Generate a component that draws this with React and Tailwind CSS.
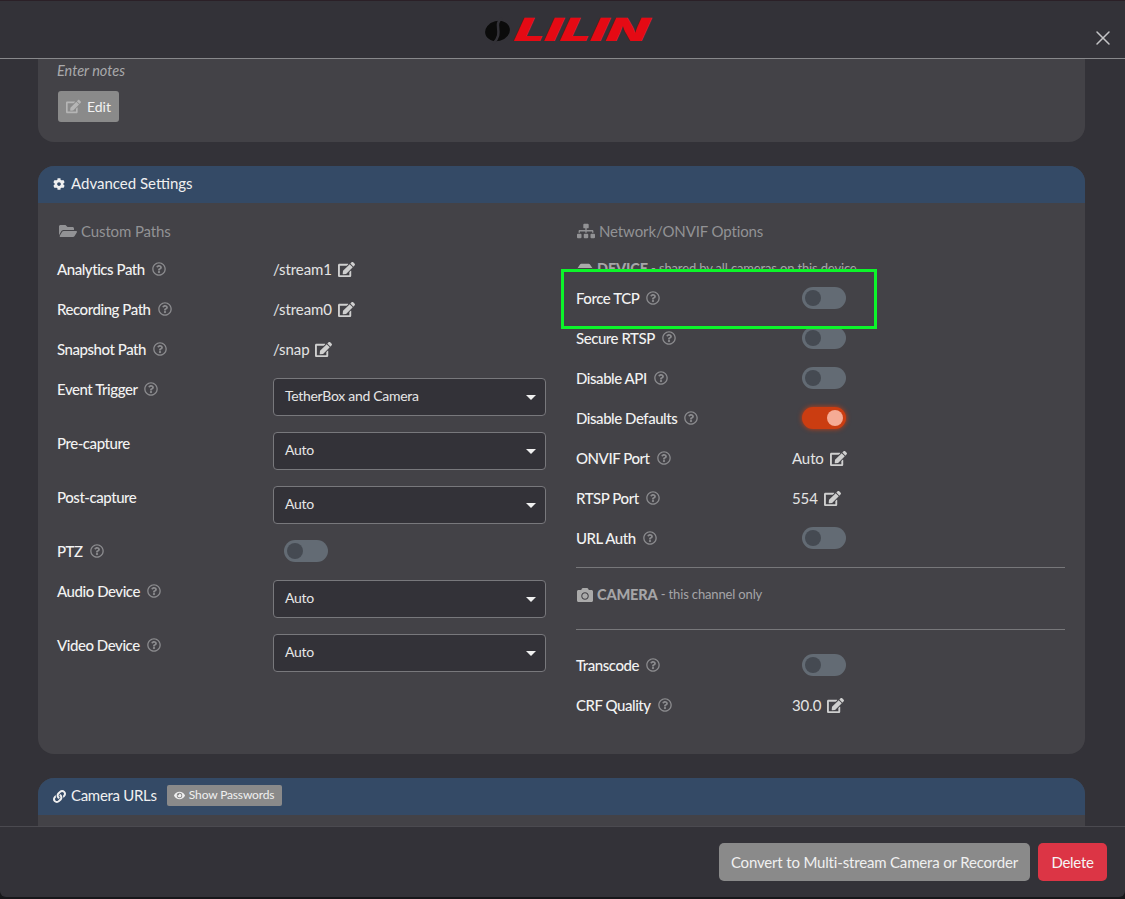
import { FaCamera, FaCog, FaEdit, FaEye, FaFolderOpen, FaHdd, FaLink, FaRegQuestionCircle, FaSitemap } from "react-icons/fa";
import { X } from "lucide-react";

function Help({ className = "" }) {
  return <FaRegQuestionCircle className={`ml-[7px] inline-block text-[14px] text-[#8b8b8e] ${className}`} />;
}

function Toggle({ on = false, className = "" }) {
  return (
    <span
      className={`flex h-[22px] w-[44px] items-center rounded-full px-[3px] ${
        on ? "justify-end bg-[#cb3d11] shadow-[0_0_5px_#cb3d11]" : "justify-start bg-[#636b74]"
      } ${className}`}
    >
      <span className={`h-4 w-4 rounded-full ${on ? "bg-[#f5ab95]" : "bg-[#454a52]"}`} />
    </span>
  );
}

function Label({ children, help = true }) {
  return (
    <span className="flex h-[22px] w-[216px] shrink-0 items-center text-[15px] font-medium tracking-[-0.45px] text-[#f2f2f2]">
      {children}
      {help && <Help />}
    </span>
  );
}

function Row({ label, children }) {
  return (
    <div className="flex h-10 items-center">
      <Label>{label}</Label>
      {children}
    </div>
  );
}

function EditValue({ value }) {
  return (
    <span className="flex items-center text-[15px] tracking-[-0.1px] text-[#e4e4e4]">
      {value}
      <FaEdit className="ml-[6px] text-[17px] text-[#cfcfcf]" />
    </span>
  );
}

function SelectRow({ label, value, help = true }) {
  return (
    <div className="flex h-[54px] items-start">
      <Label help={help}>{label}</Label>
      <div className="flex h-[38px] w-[273px] items-center justify-between rounded-[4px] border border-[#78787c] bg-[#333238] pl-[11px] pr-[9px] text-[14px] tracking-[-0.3px] text-[#e6e6e6]">
        <span className="pb-[3px]">{value}</span>
        <span className="h-0 w-0 border-x-[5px] border-t-[5px] border-x-transparent border-t-[#f0f0f0]" />
      </div>
    </div>
  );
}

function Heading({ icon, children }) {
  return (
    <h3 className="flex h-[22px] items-center gap-[4px] pb-[2px] text-[15px] tracking-[-0.12px] text-[#929295]">
      {icon}
      {children}
    </h3>
  );
}

function Logo() {
  return (
    <svg width="176" height="40" viewBox="0 0 176 40" className="block">
      <ellipse cx="12.5" cy="21" rx="12.5" ry="10" transform="rotate(-14 12.5 21)" fill="#0b0b0b" />
      <path d="M17 8C7 15 20 22 8 34" fill="none" stroke="#333238" strokeWidth="2.5" />
      <text
        x="29"
        y="31"
        textLength="133"
        lengthAdjust="spacingAndGlyphs"
        fill="#e50a14"
        fontFamily="Inter, sans-serif"
        fontSize="32"
        fontWeight="900"
        fontStyle="italic"
        transform="skewX(-10) translate(5 0)"
      >
        LILIN
      </text>
    </svg>
  );
}

export default function App() {
  return (
    <div className="h-[899px] w-[1125px] overflow-hidden bg-[#17171a] font-['Lato',sans-serif]">
      <div className="flex h-[897px] flex-col overflow-hidden rounded-b-md border-t border-[#2b2027] bg-[#333238]">
        {/* Header */}
        <header className="relative flex h-[58px] shrink-0 items-center justify-center border-b border-[#88888b] pl-[21px]">
          <Logo />
          <X className="absolute right-[10px] top-[25px] h-6 w-6 text-[#c4c4c6]" strokeWidth={1.5} />
        </header>

        {/* Scrolling body */}
        <main className="flex-1 overflow-hidden pl-[38px] pr-[40px]">
          <section className="h-[83px] rounded-b-2xl bg-[#434247] pl-[20px] pt-[2px]">
            <p className="-ml-[1px] text-[14.5px] italic leading-[20px] text-[#a9a9ab]">Enter notes</p>
            <button className="mt-[10px] flex h-[31px] w-[61px] items-center justify-center gap-[6px] rounded-[3px] bg-[#8a8a8a] pb-[1px] text-[14px] text-[#f2f2f2]">
              <FaEdit className="text-[15px] text-[#b5b5b5]" />
              Edit
            </button>
          </section>

          <section className="mt-[24px] h-[588px] rounded-2xl bg-[#434247]">
            <div className="flex h-[37px] items-center gap-[6px] rounded-t-2xl bg-[#344a66] pb-[2px] pl-[15px] text-[15px] text-[#f0f0f0]">
              <FaCog className="text-[12px]" />
              Advanced Settings
            </div>

            <div className="grid grid-cols-[489px_489px] gap-x-[30px] pl-[19px] pt-[18px]">
              {/* Left column */}
              <div>
                <Heading icon={<FaFolderOpen className="ml-[2px] text-[18px]" />}>Custom Paths</Heading>
                <div className="mt-[6px]">
                  <Row label="Analytics Path"><EditValue value="/stream1" /></Row>
                  <Row label="Recording Path"><EditValue value="/stream0" /></Row>
                  <Row label="Snapshot Path"><EditValue value="/snap" /></Row>
                </div>
                <div className="mt-[9px]">
                  <SelectRow label="Event Trigger" value="TetherBox and Camera" />
                  <SelectRow label="Pre-capture" value="Auto" help={false} />
                  <SelectRow label="Post-capture" value="Auto" help={false} />
                  <div className="flex h-10 items-start">
                    <Label>PTZ</Label>
                    <Toggle className="ml-[11px]" />
                  </div>
                  <SelectRow label="Audio Device" value="Auto" />
                  <SelectRow label="Video Device" value="Auto" />
                </div>
              </div>

              {/* Right column */}
              <div>
                <Heading icon={<FaSitemap className="ml-[1px] text-[18px]" />}>Network/ONVIF Options</Heading>
                <p className="mt-[16px] flex h-[20px] items-center text-[13px] tracking-[-0.15px] text-[#a5a5a7]">
                  <FaHdd className="ml-[1px] mr-[4px] text-[16px] text-[#aaaaaa]" />
                  <b className="text-[14.5px] font-black">DEVICE</b>&nbsp;- shared by all cameras on this device
                </p>

                {/* Highlighted row */}
                <div className="relative z-10 -mx-[15px] -mt-[10px] flex h-[60px] w-[316px] items-center border-[3px] border-[#0cf52a] bg-[#434247] pb-[2px] pl-[12px]">
                  <Label>Force TCP</Label>
                  <Toggle className="ml-[10px]" />
                </div>

                <div className="-mt-[11px]">
                  <Row label="Secure RTSP"><Toggle className="ml-[10px]" /></Row>
                  <Row label="Disable API"><Toggle className="ml-[10px]" /></Row>
                  <Row label="Disable Defaults"><Toggle on className="ml-[10px]" /></Row>
                  <Row label="ONVIF Port"><EditValue value="Auto" /></Row>
                  <Row label="RTSP Port"><EditValue value="554" /></Row>
                  <Row label="URL Auth"><Toggle className="ml-[10px]" /></Row>
                </div>

                <div className="mt-[9px] h-[63px] border-y border-[#77777a]">
                  <p className="mt-[17px] flex h-[20px] items-center text-[13px] tracking-[-0.15px] text-[#a5a5a7]">
                    <FaCamera className="ml-[1px] mr-[4px] text-[16px] text-[#aaaaaa]" />
                    <b className="text-[14.5px] font-black">CAMERA</b>&nbsp;- this channel only
                  </p>
                </div>

                <div className="mt-[15px]">
                  <Row label="Transcode"><Toggle className="ml-[10px]" /></Row>
                  <Row label="CRF Quality"><EditValue value="30.0" /></Row>
                </div>
              </div>
            </div>
          </section>

          <section className="mt-[24px] rounded-t-2xl bg-[#434247] pb-[20px]">
            <div className="flex h-[37px] items-center rounded-t-2xl bg-[#344a66] pl-[15px] text-[15px] tracking-[-0.3px] text-[#f0f0f0]">
              <FaLink className="mr-[5px] text-[13px]" />
              <span className="pb-[2px]">Camera URLs</span>
              <button className="mb-[2px] ml-[10px] flex h-[21px] w-[115px] items-center justify-center gap-[4px] rounded-[2px] bg-[#8a8a8a] pb-[1px] text-[12px] tracking-[-0.15px] text-[#f0f0f0]">
                <FaEye className="text-[11px]" />
                Show Passwords
              </button>
            </div>
          </section>
        </main>

        {/* Footer */}
        <footer className="flex h-[71px] shrink-0 items-start justify-end gap-2 border-t border-[#4b4a50] pr-[18px] pt-[16px]">
          <button className="h-[38px] w-[311px] whitespace-nowrap rounded-[5px] bg-[#8a8a8a] text-[15px] tracking-[-0.17px] text-[#f0f0f0]">
            Convert to Multi-stream Camera or Recorder
          </button>
          <button className="h-[38px] w-[69px] rounded-[5px] bg-[#dc3545] text-[15px] tracking-[-0.3px] text-[#f5f5f5]">Delete</button>
        </footer>
      </div>
    </div>
  );
}
